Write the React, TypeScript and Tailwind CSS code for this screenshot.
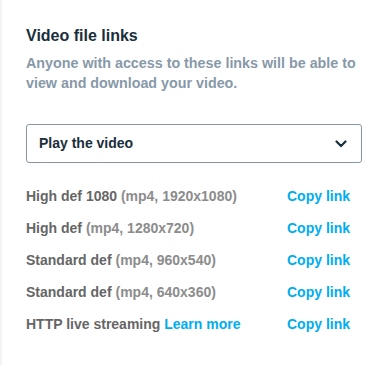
import React from "react";

const rows: { label: string; detail: string; learn?: boolean }[] = [
  { label: "High def 1080", detail: "(mp4, 1920x1080)" },
  { label: "High def", detail: "(mp4, 1280x720)" },
  { label: "Standard def", detail: "(mp4, 960x540)" },
  { label: "Standard def", detail: "(mp4, 640x360)" },
  { label: "HTTP live streaming", detail: "", learn: true },
];

export default function App() {
  return (
    <div className="flex h-[365px] w-[384px] bg-white" style={{ fontFamily: '"Liberation Sans", Arial, sans-serif' }}>
      <div className="w-[2px] shrink-0 bg-[#f3f3f3]" />
      <div className="flex flex-1 flex-col pl-[24px] pr-[22px] pt-[25px]">
        <h2 className="text-[16px] font-bold leading-[22px] text-[#1a2e3b]">Video file links</h2>
        <p className="mt-[6px] text-[14.3px] font-bold leading-[20px] text-[#8799a8]">
          Anyone with access to these links will be able to view and download your video.
        </p>
        <div className="mt-[31px] flex h-[39px] items-center justify-between rounded-[3px] border border-[#8696a4] pl-[12px] pr-[14px]">
          <span className="text-[14px] font-bold text-[#1a2e3b]">Play the video</span>
          <svg width="12" height="8" viewBox="0 0 12 8" fill="none">
            <path d="M1.5 1.5 L6 6 L10.5 1.5" stroke="#1a2e3b" strokeWidth="2.2" strokeLinecap="round" strokeLinejoin="round" />
          </svg>
        </div>
        <div className="mt-[17px] flex flex-col">
          {rows.map((r, i) => (
            <div key={i} className="flex h-[32px] items-center text-[14px] font-bold">
              <div className="w-[261px]">
                <span className="text-[#666666]">{r.label}</span>{" "}
                {r.learn ? (
                  <span className="text-[#00adef]">Learn more</span>
                ) : (
                  <span className="text-[#8c8c8c]">{r.detail}</span>
                )}
              </div>
              <span className="text-[#00adef]">Copy link</span>
            </div>
          ))}
        </div>
      </div>
    </div>
  );
}
